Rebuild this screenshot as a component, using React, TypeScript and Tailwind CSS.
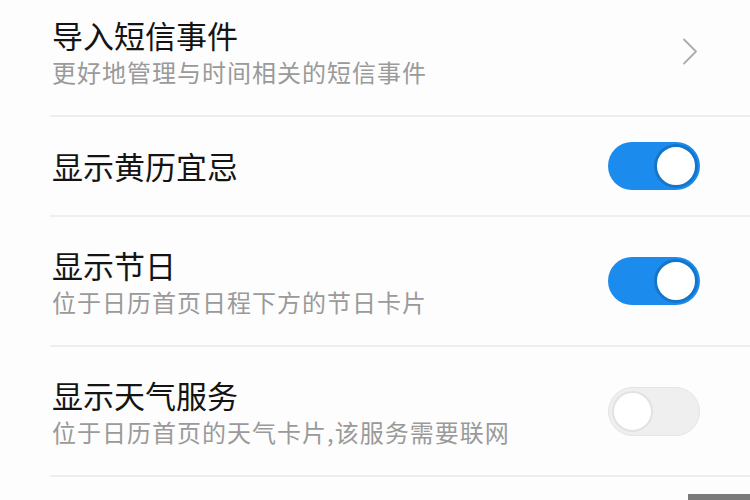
type Row = {
  title: string;
  desc?: string;
  kind: "link" | "on" | "off";
};

const ROWS: Row[] = [
  { title: "导入短信事件", desc: "更好地管理与时间相关的短信事件", kind: "link" },
  { title: "显示黄历宜忌", kind: "on" },
  { title: "显示节日", desc: "位于日历首页日程下方的节日卡片", kind: "on" },
  { title: "显示天气服务", desc: "位于日历首页的天气卡片,该服务需要联网", kind: "off" },
];

function Toggle({ on }: { on: boolean }) {
  if (on) {
    return (
      <div className="flex h-[48px] w-[92px] items-center justify-end rounded-full bg-[#1b8ced] p-[2px]">
        <div className="size-[44px] rounded-full border-[3px] border-[#1576c9] bg-white" />
      </div>
    );
  }
  return (
    <div className="flex h-[49px] w-[92px] items-center justify-start rounded-full border border-[#e4e4e4] bg-[#efefef] p-[3px]">
      <div className="size-[41px] rounded-full border-2 border-[#e2e2e2] bg-white" />
    </div>
  );
}

function Chevron() {
  return (
    <svg width="16" height="27" viewBox="0 0 16 27" fill="none" className="mr-[2px]">
      <path d="M2 1.5 L14 13.5 L2 25.5" stroke="#ababab" strokeWidth="1.8" strokeLinecap="round" strokeLinejoin="round" />
    </svg>
  );
}

export default function App() {
  return (
    <div
      className="h-[500px] w-[750px] overflow-hidden bg-[#fdfdfd]"
      style={{ fontFamily: '"Noto Sans CJK SC", "Noto Sans", sans-serif' }}
    >
      <ul className="mt-[-13px] flex flex-col">
        {ROWS.map((row) => (
          <li
            key={row.title}
            className={`ml-[50px] flex items-center justify-between border-b-2 border-[#eeeeee] pr-[50px] ${
              row.desc ? "h-[130px]" : "h-[100px]"
            }`}
          >
            <div className="flex flex-col gap-[3px] pl-[2px]">
              <span className="text-[31px] leading-[38px] text-[#141414]">{row.title}</span>
              {row.desc && (
                <span className="text-[24px] leading-[30px] tracking-[1px] text-[#9a9a9a]">
                  {row.desc}
                </span>
              )}
            </div>
            {row.kind === "link" ? <Chevron /> : <Toggle on={row.kind === "on"} />}
          </li>
        ))}
      </ul>
      <div className="mt-[17px] flex justify-end">
        <div className="h-[6px] w-[62px] bg-[#7a7a7a]" />
      </div>
    </div>
  );
}
